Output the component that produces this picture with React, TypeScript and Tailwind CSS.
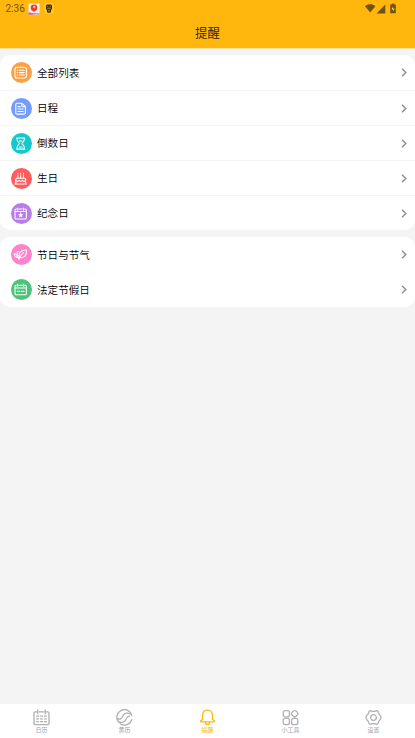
import type { ReactNode } from 'react'

interface Item {
  label: string
  color: string
  icon: ReactNode
}

const REMINDERS: Item[] = [
  {
    label: '全部列表',
    color: 'bg-[#ff9f43]',
    icon: (
      <>
        <rect x="5" y="5.3" width="11.4" height="10.6" rx="2" />
        <path d="M7.2 8.2h.3M9.2 8.2h5M7.2 10.6h.3M9.2 10.6h5M7.2 13h.3M9.2 13h5" />
      </>
    ),
  },
  {
    label: '日程',
    color: 'bg-[#729cff]',
    icon: (
      <>
        <path d="M11.8 5.2H7a1.2 1.2 0 0 0-1.2 1.2v8.5A1.2 1.2 0 0 0 7 16.1h7.2a1.2 1.2 0 0 0 1.2-1.2V8.6l-3.6-3.4v2.5a.9.9 0 0 0 .9.9h2.7" />
        <path d="M8 8.6h2.2M8 11h5.2M8 13.4h5.2" />
      </>
    ),
  },
  {
    label: '倒数日',
    color: 'bg-[#12c9cc]',
    icon: (
      <>
        <path d="M6.6 5h8.2M6.6 16.1h8.2M7.2 5v2.1c0 1.8 2.1 2.2 2.1 3.4s-2.1 1.8-2.1 3.5v2.1M14.2 5v2.1c0 1.8-2.1 2.2-2.1 3.4s2.1 1.8 2.1 3.5v2.1" />
        <path d="M9.4 8h2.6M9.4 14h2.6" />
      </>
    ),
  },
  {
    label: '生日',
    color: 'bg-[#ff5c5c]',
    icon: (
      <>
        <path d="M4.8 15.9h11.8M5.8 15.7v-4.5a1 1 0 0 1 1-1h7.8a1 1 0 0 1 1 1v4.5" />
        <path d="M5.8 12.3l1.6 1.3 1.7-1.3 1.6 1.3 1.7-1.3 1.6 1.3 1.6-1.3M7.9 7.4v2.7M10.7 7.4v2.7M13.5 7.4v2.7" />
        <path d="M7.9 5.3v.7M10.7 5.3v.7M13.5 5.3v.7" />
      </>
    ),
  },
  {
    label: '纪念日',
    color: 'bg-[#b97de8]',
    icon: (
      <>
        <path d="M5 8.5h11.4M7.8 4.9v2.2M13.6 4.9v2.2M6.6 6h-.4A1.2 1.2 0 0 0 5 7.2v7.5a1.2 1.2 0 0 0 1.2 1.2h9a1.2 1.2 0 0 0 1.2-1.2V7.2A1.2 1.2 0 0 0 15.2 6h-.4M9.2 6h3" />
        <path d="M10.7 9.9l.7 1.4 1.5.2-1.1 1.1.2 1.5-1.3-.7-1.3.7.2-1.5-1.1-1.1 1.5-.2z" fill="white" strokeWidth="0.4" />
      </>
    ),
  },
]

const HOLIDAYS: Item[] = [
  {
    label: '节日与节气',
    color: 'bg-[#ff82cc]',
    icon: (
      <>
        <path d="M9.6 13.4C7.9 9.4 10.6 6.1 16.5 5.8c.3 5-1.8 8.6-6.9 7.6z" />
        <path d="M13.4 8.7c-2.3 1.5-3.6 3.5-4.4 6.6-.5-1.5-1.3-2.6-2.6-3.4" />
        <path d="M8.3 13.4c-2.5.3-4-1.3-4.1-3.6 2.2-.2 4 1.1 4.1 3.6zM7.2 8.9c0-1 .6-1.6 1.4-1.7" />
      </>
    ),
  },
  {
    label: '法定节假日',
    color: 'bg-[#4fc27a]',
    icon: (
      <>
        <path d="M5 9h11.4M7.6 5v2.2M13.8 5v2.2M6.4 6.2h-.2A1.2 1.2 0 0 0 5 7.4v7.2a1.2 1.2 0 0 0 1.2 1.2h9a1.2 1.2 0 0 0 1.2-1.2V7.4a1.2 1.2 0 0 0-1.2-1.2H15M9 6.2h3.4" />
        <path d="M7.4 12.4h2.4M11.6 12.4H14" strokeWidth="1.2" />
      </>
    ),
  },
]

const TABS = [
  {
    label: '日历',
    icon: (
      <>
        <path d="M3.8 2.8H2.2A1.2 1.2 0 0 0 1 4v10.4a1.2 1.2 0 0 0 1.2 1.2h12.6a1.2 1.2 0 0 0 1.2-1.2V4a1.2 1.2 0 0 0-1.2-1.2h-1.6M4.8 1v3.8M12.2 1v3.8M6.3 2.8h4.5" />
        <path d="M3.7 7.2h1.8M7.6 7.2h1.8M11.5 7.2h1.8M3.7 9.9h1.8M7.6 9.9h1.8M11.5 9.9h1.8M3.7 12.7h1.8M7.6 12.7h1.8M11.5 12.7h1.8" />
      </>
    ),
  },
  {
    label: '黄历',
    icon: (
      <>
        <path d="M15.8 6.4A7.6 7.6 0 1 0 2.2 12.6" />
        <path d="M4.2 14.7a7.6 7.6 0 0 0 11.6-4.1" />
        <path d="M1.2 9.6c3 1.2 4.6.2 5.4-2 .8-2.4 2.4-3.7 5.2-3.5 1.2.1 2.2.5 3 1.2" />
        <path d="M2.6 13c4 1.1 6.6-.3 7.6-3.1.5-1.6 1.3-2.5 3.2-2.8" />
      </>
    ),
  },
  {
    label: '提醒',
    icon: (
      <>
        <path d="M8.5 1.2C5.3 1.2 3.5 3.5 3.5 6.6V10c0 1.3-2.1 1.4-2.1 2.2 0 .4.5.6 1 .6h12.2c.5 0 1-.2 1-.6 0-.8-2.1-.9-2.1-2.2V6.6c0-3.1-1.8-5.4-5-5.4z" />
        <path d="M6.4 13c0 1.6.8 2.5 2.1 2.5s2.1-.9 2.1-2.5" />
      </>
    ),
  },
  {
    label: '小工具',
    icon: (
      <>
        <rect x="1.2" y="1.6" width="6.2" height="6.2" rx="1.9" />
        <rect x="9.9" y="1.9" width="5.6" height="5.6" rx="1.9" transform="rotate(45 12.7 4.7)" />
        <rect x="1.2" y="9.4" width="6.2" height="6.2" rx="1.9" />
        <rect x="9.6" y="9.4" width="6.2" height="6.2" rx="1.9" />
      </>
    ),
  },
  {
    label: '设置',
    icon: (
      <>
        <path d="M5.3 1.7c1 0 1.9.8 3.2.8s2.2-.8 3.2-.8c1.2.2 1.6 1.1 1.8 2.1.2 1.2.7 1.8 1.6 2.5 1.2 1 1.2 3.4 0 4.4-.9.7-1.4 1.3-1.6 2.5-.2 1-.6 1.9-1.8 2.1-1 0-1.9-.8-3.2-.8s-2.2.8-3.2.8c-1.2-.2-1.6-1.1-1.8-2.1-.2-1.2-.7-1.8-1.6-2.5-1.2-1-1.2-3.4 0-4.4.9-.7 1.4-1.3 1.6-2.5.2-1 .6-1.9 1.8-2.1z" />
        <path d="M10.9 6.9A2.9 2.9 0 0 0 5.7 9.2M6.1 10.1a2.9 2.9 0 0 0 5.2-2.3" />
      </>
    ),
  },
]

function StatusBar() {
  return (
    <div className="flex h-[17px] items-center pl-[5.5px] pr-[17px] text-[#72530e]">
      <span className="mt-px font-['Roboto',sans-serif] text-[10px] leading-none">2:36</span>
      <svg className="ml-[3px]" width="12" height="12" viewBox="0 0 12 12">
        <rect x="0.5" y="0.5" width="11" height="11" fill="#fff3e9" />
        <path d="M.5 8.7l3 1 8 .4v1.4H.5z" fill="#c598ed" />
        <path d="M.5 10.1l5 .3v1.1h-5z" fill="#fb503b" />
        <path d="M4.3 6.8h3.4l-.9 2H5.2z" fill="#ee6244" />
        <circle cx="6" cy="4.7" r="3.3" fill="#ee3a24" />
        <circle cx="6.2" cy="4" r="1.2" fill="#ffb799" />
      </svg>
      <svg className="ml-[4px]" width="10" height="11" viewBox="0 0 10 11">
        <rect width="10" height="11" rx="2" fill="#ffc528" />
        <path d="M3 1.5h4l1 1V6L7 7v2l-1 .8H4L3 9V7L2 6V2.5z" fill="#392b12" />
        <path d="M3.2 3.2h1M5.8 3.2h1M3.2 5.2h3.6M4 7.8h2" stroke="#ffc528" strokeWidth="0.7" />
      </svg>
      <svg className="-mt-px ml-auto" width="33" height="11" viewBox="0 0 33 11" fill="currentColor">
        <path d="M0 3.2C3.2.7 7.2.7 10.4 3.2L5.2 9.6z" />
        <path d="M20.3 1.6v8.8h-8.8z" />
        <path d="M25.2 1.4h1.5V.5h2.6v.9h1.5v8.8h-5.6z" />
        <path d="M27.9 3.4v2h1.5L28 8.6V6.5h-1.4z" fill="#ffdc7c" />
      </svg>
    </div>
  )
}

function Row({ item, divider }: { item: Item; divider: boolean }) {
  return (
    <li className={`flex h-[35px] items-center pl-[10.5px] pr-[8px] ${divider ? 'border-t border-[#f4f4f4]' : ''}`}>
      <span className={`flex size-[21px] shrink-0 rounded-full ${item.color}`}>
        <svg className="-ml-[0.5px]" width="21" height="21" viewBox="0 0 21 21" fill="none" stroke="white" strokeWidth="1.05" strokeLinecap="round" strokeLinejoin="round">
          {item.icon}
        </svg>
      </span>
      <span className="ml-[5.5px] mt-px text-[10.6px] font-[350] leading-none text-black">{item.label}</span>
      <svg className="ml-auto" width="6" height="9" viewBox="0 0 6 9" fill="none" stroke="#929292" strokeWidth="1.5">
        <path d="M1 .8l3.8 3.7L1 8.2" />
      </svg>
    </li>
  )
}

function Card({ items, divided = false }: { items: Item[]; divided?: boolean }) {
  return (
    <ul className="overflow-hidden rounded-[10px] bg-white">
      {items.map((item, i) => (
        <Row key={item.label} item={item} divider={divided && i > 0} />
      ))}
    </ul>
  )
}

export default function App() {
  return (
    <div className="flex h-screen flex-col bg-[#f4f4f4] font-['Noto_Sans_CJK_SC',sans-serif]">
      <header className="h-[48px] shrink-0 bg-[#ffb70d]">
        <StatusBar />
        <h1 className="flex h-[33px] items-center justify-center text-[12.5px] font-[350] leading-none text-[#211a0a]">提醒</h1>
      </header>
      <div className="h-px shrink-0 bg-[#fbe1a0]" />

      <main className="flex flex-1 flex-col gap-[7px] pt-[6px]">
        <Card items={REMINDERS} divided />
        <Card items={HOLIDAYS} />
      </main>

      <nav className="grid h-[34px] shrink-0 grid-cols-5 bg-white">
        {TABS.map((tab) => {
          const active = tab.label === '提醒'
          return (
            <button key={tab.label} className={`flex flex-col items-center pt-[5px] ${active ? 'text-[#ffb70d]' : 'text-[#b0b0b0]'}`}>
              <svg width="17" height="17" viewBox="0 0 17 17" fill="none" stroke="currentColor" strokeWidth="1.3" strokeLinecap="round" strokeLinejoin="round">
                {tab.icon}
              </svg>
              <span className={`text-[6px] leading-[7px] ${active ? '' : 'text-[#9b9fa5]'}`}>{tab.label}</span>
            </button>
          )
        })}
      </nav>
    </div>
  )
}
